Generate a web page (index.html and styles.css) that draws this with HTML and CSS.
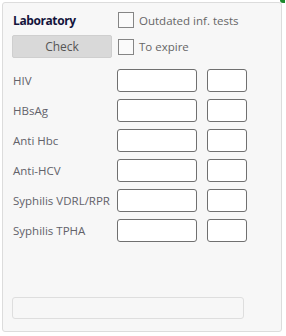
FILE: index.html
```html
<!DOCTYPE html>
<html lang="en">
<head>
  <meta charset="UTF-8" />
  <meta name="viewport" content="width=device-width, initial-scale=1.0"/>
  <title>Laboratory</title>
  <link rel="stylesheet" href="styles.css">
</head>
<body>

  <span class="corner"></span>

  <div class="panel">
    <div class="head">
      <span class="title">Laboratory</span>
      <label class="check"><span class="box"></span>Outdated inf. tests</label>
      <button class="btn">Check</button>
      <label class="check"><span class="box"></span>To expire</label>
    </div>

    <div class="tests">
      <span class="name">HIV</span>
      <input class="value" type="text">
      <input class="date" type="text">

      <span class="name">HBsAg</span>
      <input class="value" type="text">
      <input class="date" type="text">

      <span class="name">Anti Hbc</span>
      <input class="value" type="text">
      <input class="date" type="text">

      <span class="name">Anti-HCV</span>
      <input class="value" type="text">
      <input class="date" type="text">

      <span class="name">Syphilis VDRL/RPR</span>
      <input class="value" type="text">
      <input class="date" type="text">

      <span class="name">Syphilis TPHA</span>
      <input class="value" type="text">
      <input class="date" type="text">
    </div>

    <div class="note"></div>
  </div>

</body>
</html>
```

FILE: styles.css
```css
body {
  margin: 0;
  background: #fff;
  font-family: "Open Sans", "Noto Sans", sans-serif;
  font-size: 11.5px;
}

.corner {
  position: absolute;
  top: 0;
  left: 280px;
  width: 5px;
  height: 3px;
  background: #1d8a2e;
  border-radius: 0 0 0 3px;
}

.panel {
  box-sizing: border-box;
  width: 280px;
  height: 330px;
  margin: 2px;
  padding: 9px 0 12px 10px;
  border: 1px solid #dcdcdc;
  border-radius: 3px;
  background: #f7f7f7;
  display: flex;
  flex-direction: column;
}

.head {
  display: grid;
  grid-template-columns: 105px auto;
  grid-template-rows: 16px 23px;
  row-gap: 7px;
  align-items: center;
}

.title {
  font-weight: bold;
  font-size: 12px;
  letter-spacing: -0.4px;
  color: #14143c;
}

.check {
  display: flex;
  align-items: center;
  gap: 5px;
  color: #666;
}

.box {
  box-sizing: border-box;
  width: 16px;
  height: 16px;
  border: 1px solid #858585;
  background: #fafafa;
}

.btn {
  box-sizing: border-box;
  width: 100px;
  height: 23px;
  margin-left: -1px;
  padding: 0;
  border: 1px solid #cfcfcf;
  border-radius: 2px;
  background: #d9d9d9;
  color: #555;
  font: inherit;
  font-size: 12px;
}

.tests {
  display: grid;
  grid-template-columns: 94px 80px 40px;
  grid-auto-rows: 23px;
  column-gap: 10px;
  row-gap: 7px;
  align-items: center;
  margin-top: 11px;
}

.name {
  color: #62626a;
  white-space: nowrap;
}

.tests input {
  box-sizing: border-box;
  height: 23px;
  width: 100%;
  margin: 0;
  border: 1px solid #707070;
  border-radius: 3px;
  background: #fff;
}

.note {
  box-sizing: border-box;
  width: 232px;
  height: 22px;
  margin: auto 0 0 -1px;
  border: 1px solid #dedede;
  border-radius: 3px;
}
```
